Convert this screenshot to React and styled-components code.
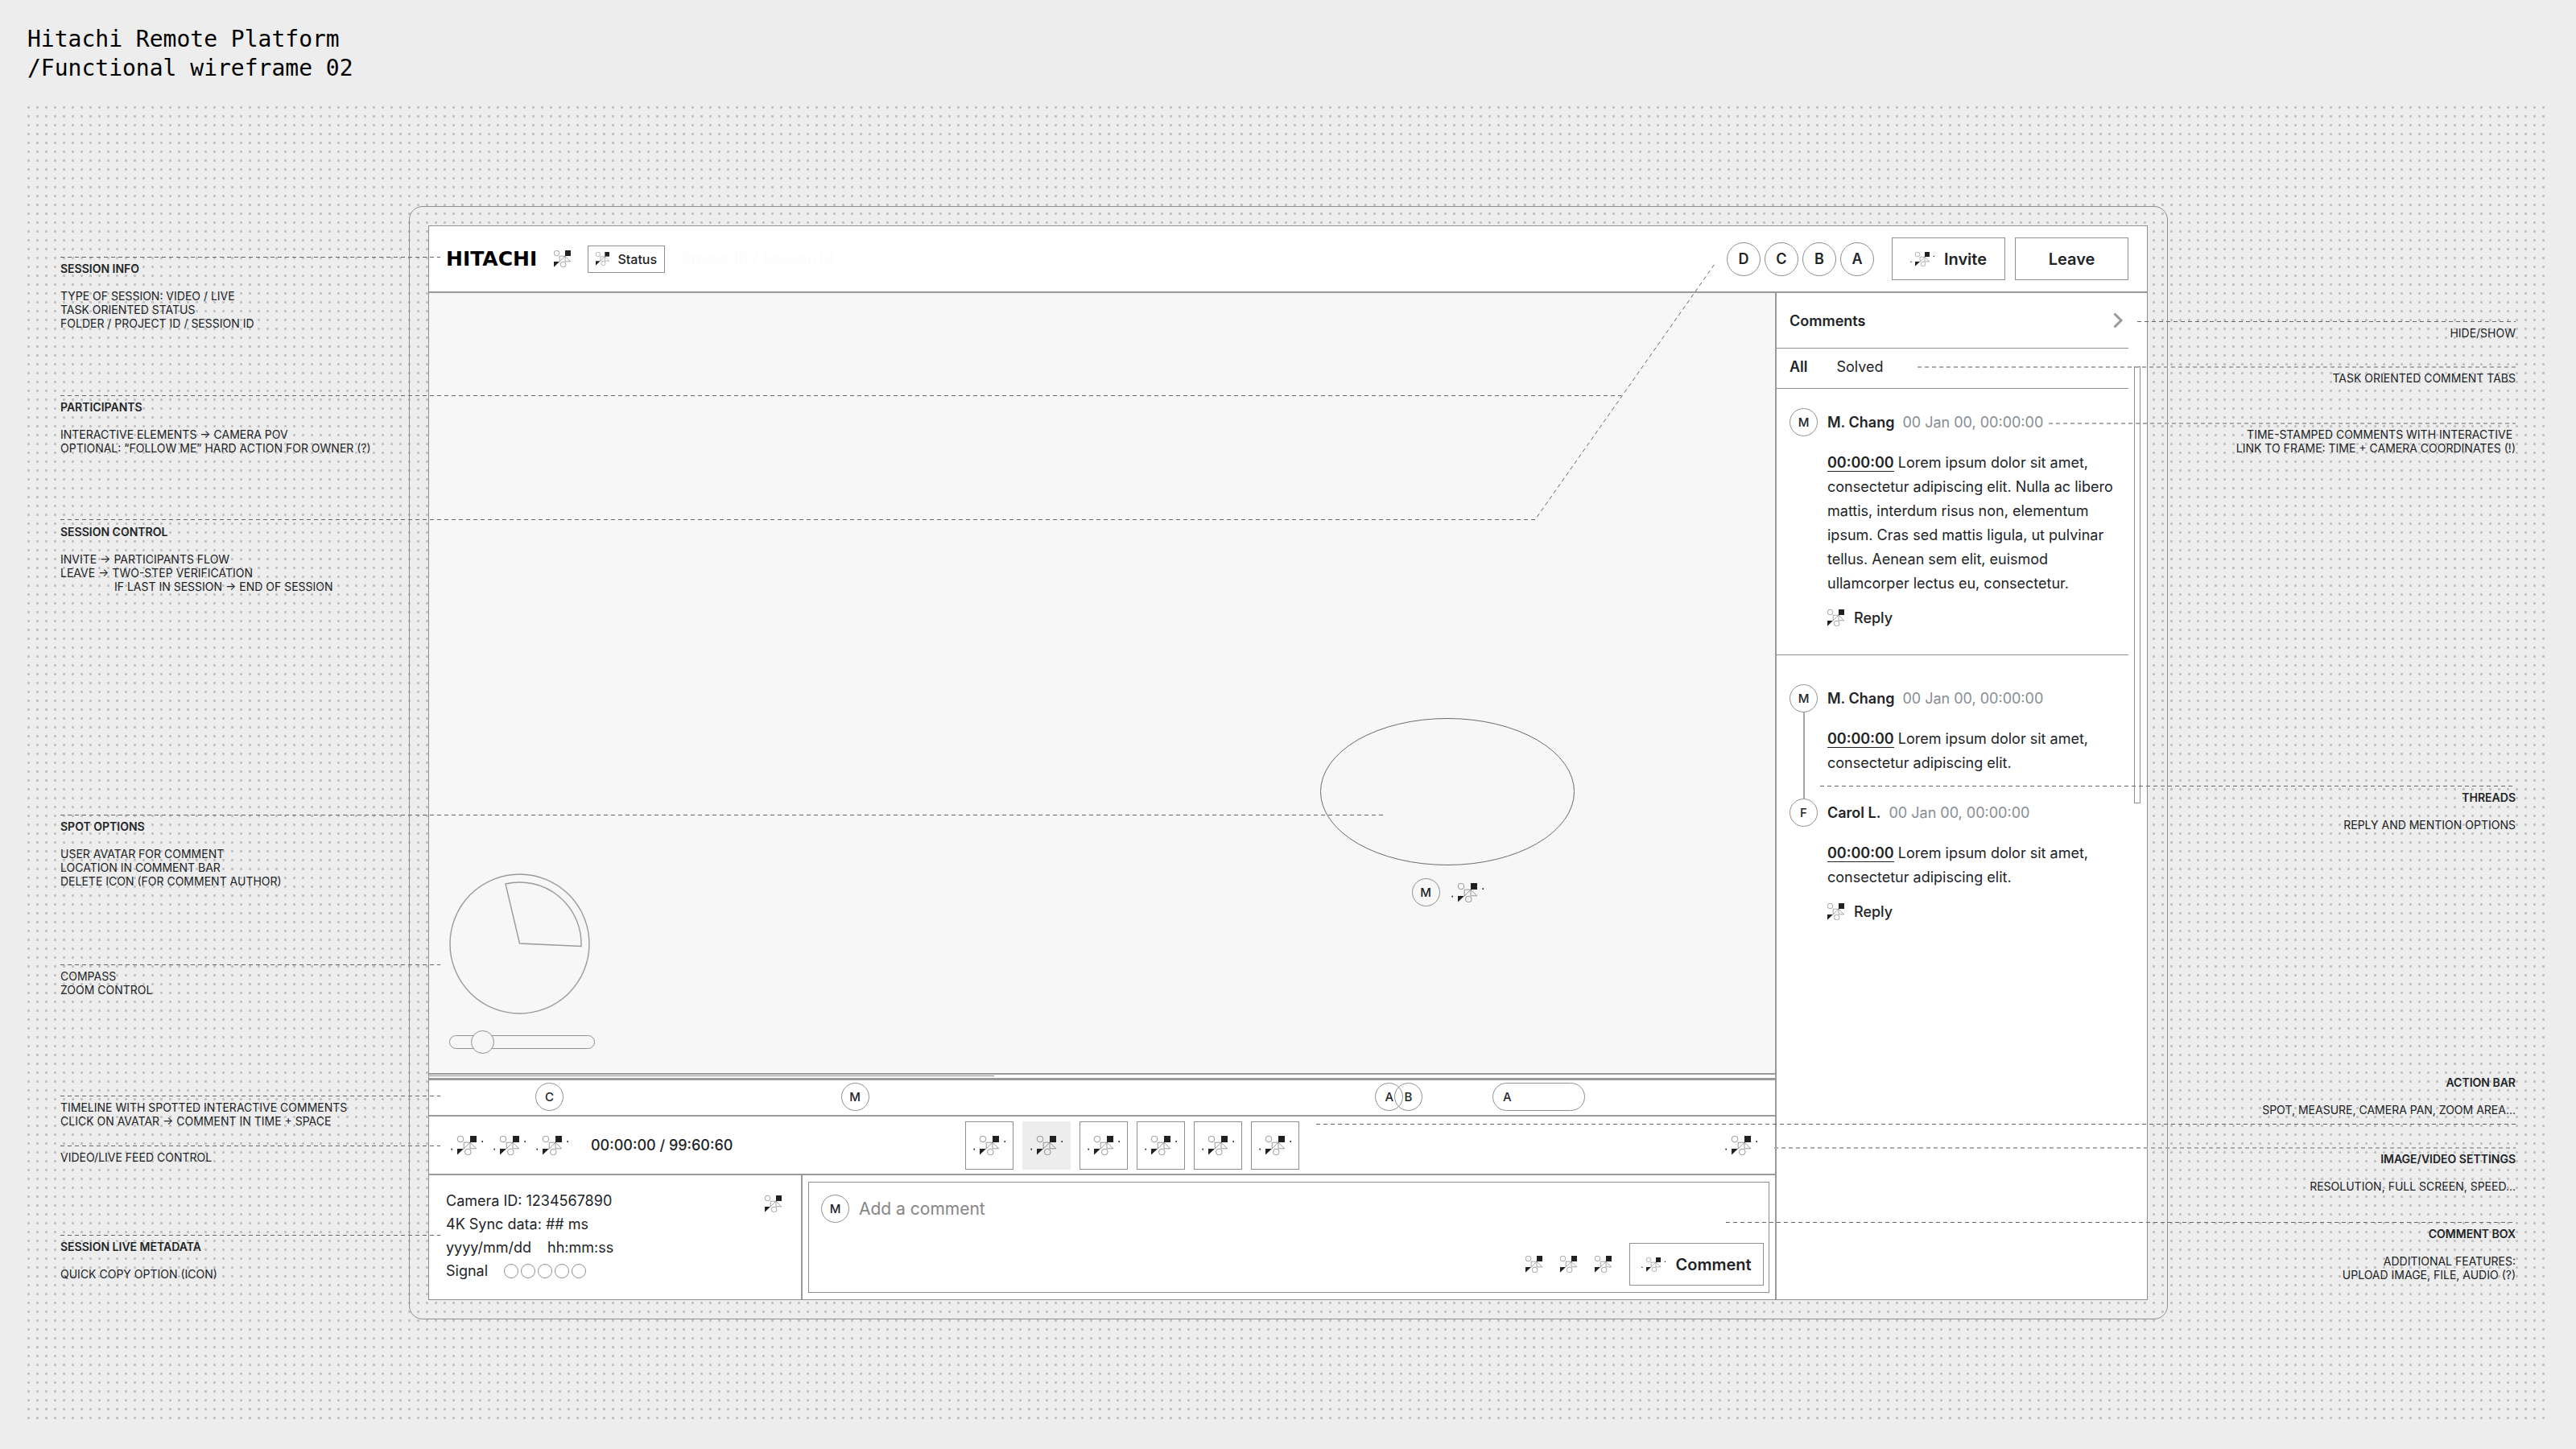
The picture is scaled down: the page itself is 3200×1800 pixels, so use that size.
import React from "react";
import styled, { createGlobalStyle, css } from "styled-components";

const line = "#9a9a9a";
const thin = "1px solid #8f8f8f";
const thick = `2px solid ${line}`;
const ink = "#212427";

const GlobalStyle = createGlobalStyle`
  *, *::before, *::after { box-sizing: border-box; }
  body {
    margin: 0;
    background: #ededed;
    color: ${ink};
    font-family: Inter, "Liberation Sans", sans-serif;
  }
  h1, h2, h3, p, ul { margin: 0; padding: 0; }
  button, input, textarea { font: inherit; color: inherit; }
`;

const Page = styled.main`
  display: flex;
  flex-direction: column;
  min-height: 100vh;
  padding: 0 35px 33px 30px;
`;

const Title = styled.h1`
  height: 128px;
  padding: 31px 0 0 4px;
  color: #000;
  font-family: "DejaVu Sans Mono", monospace;
  font-size: 28px;
  font-weight: 400;
  line-height: 36px;
`;

const Board = styled.div`
  flex: 1;
  display: grid;
  grid-template-columns: 478px minmax(0, 1fr) 472px;
  padding: 128px 0;
  background-image: radial-gradient(circle, #c0c0c0 1.2px, transparent 2px);
  background-size: 11px 11px;
`;

/* Annotations */

const Notes = styled.div`
  display: grid;
  align-content: start;
  grid-template-rows: ${(p) => p.$rows};
  padding: ${(p) => (p.$side === "right" ? "143px 40px 0 0" : "63px 0 0 45px")};
  text-align: ${(p) => p.$side};
`;

const NoteBox = styled.section`
  position: relative;
  padding-top: ${(p) => (p.$below ? 0 : 6)}px;
  font-size: 14px;
  line-height: 17px;
  white-space: pre;
`;

const NoteTitle = styled.h2`
  margin-bottom: 17px;
  font-size: 14px;
  font-weight: 600;
  line-height: 17px;
`;

const Leader = styled.span`
  position: absolute;
  z-index: 1;
  top: ${(p) => p.$top || 0}px;
  ${(p) => p.$side}: 0;
  width: ${(p) => p.$length}px;
  height: ${(p) => (p.$soft ? 2 : 1)}px;
  background: repeating-linear-gradient(
    to right,
    ${(p) => (p.$soft ? "#ababab" : "#666")} 0 5px,
    transparent 5px 9px
  );
`;

const BentLeader = styled.svg`
  position: absolute;
  z-index: 1;
  left: 0;
  bottom: 100%;
  pointer-events: none;
`;

function Note({ title, text, side = "left", length, soft, below }) {
  return (
    <NoteBox $below={below}>
      {length ? (
        <Leader $side={side} $length={length} $soft={soft} $top={below ? 60 : 0} />
      ) : (
        <BentLeader width="2056" height="318" viewBox="0 0 2056 318" fill="none">
          <path d="M0 317.5H1832L2055 0" stroke="#666" strokeDasharray="5 4" />
        </BentLeader>
      )}
      {title && <NoteTitle>{title}</NoteTitle>}
      <p>{text}</p>
    </NoteBox>
  );
}

/* Placeholder glyph */

function Glyph({ size = 24, dots }) {
  const box = dots ? "-8 0 40 24" : "0 0 24 24";
  return (
    <svg
      width={dots ? Math.round((size * 40) / 24) : size}
      height={size}
      viewBox={box}
      fill="none"
      stroke="#555"
      strokeWidth="0.6"
      aria-hidden="true"
    >
      <circle cx="4" cy="4" r="3.8" />
      <circle cx="13.3" cy="20" r="3.8" />
      <path d="M8.2 8.2H16L8.2 16Z" />
      <path d="M16 8.2V15.8H23.6Z" />
      <path d="M16 0H24V8H16Z" fill="#212121" stroke="none" />
      <path d="M0 16H8L0 23.6Z" fill="#212121" stroke="none" />
      {dots && (
        <path d="M-7.6 15.8h1.6v1.6h-1.6zM30.4 6.3h1.6v1.6h-1.6z" fill="#212121" stroke="none" />
      )}
    </svg>
  );
}

/* Device */

const Device = styled.div`
  display: flex;
  padding: 23px 24px 23px 23px;
  border: ${thin};
  border-radius: 17px;
`;

const Screen = styled.div`
  flex: 1;
  display: flex;
  flex-direction: column;
  border: ${thin};
  background: #fff;
`;

const Row = styled.div`
  display: flex;
  align-items: center;
  gap: ${(p) => p.$gap || 0}px;
`;

const Header = styled.header`
  display: flex;
  align-items: center;
  justify-content: space-between;
  height: 83px;
  padding: 0 23px 0 21px;
  border-bottom: ${thick};
`;

const Logo = styled.span`
  color: #000;
  font-family: "DejaVu Sans", sans-serif;
  font-size: 25px;
  font-weight: 700;
  line-height: 24px;
`;

const SessionPath = styled.span`
  color: #fcfcfc;
  font-size: 18px;
`;

const Button = styled.button`
  display: flex;
  align-items: center;
  justify-content: center;
  gap: 12px;
  width: ${(p) => p.$width || 141}px;
  height: 53px;
  padding: 0;
  border: ${thin};
  background: #fff;
  font-size: 20px;
  font-weight: 600;
`;

const StatusButton = styled(Button)`
  gap: 10px;
  width: 96px;
  height: 34px;
  font-size: 16px;
  font-weight: 500;
`;

const IconButton = styled.button`
  display: flex;
  padding: 0;
  border: 0;
  background: none;
`;

const Avatar = styled.button`
  display: flex;
  align-items: center;
  justify-content: center;
  flex: none;
  width: ${(p) => (p.$large ? 42 : 35)}px;
  height: ${(p) => (p.$large ? 42 : 35)}px;
  padding: 0;
  border: ${thin};
  border-radius: 50%;
  background: transparent;
  font-size: ${(p) => (p.$large ? 18 : 15)}px;
  font-weight: ${(p) => (p.$large ? 600 : 500)};
`;

const Body = styled.div`
  flex: 1;
  display: grid;
  grid-template-columns: minmax(0, 1fr) 462px;
`;

const Main = styled.div`
  display: flex;
  flex-direction: column;
`;

const Viewport = styled.section`
  position: relative;
  flex: 1;
  display: flex;
  flex-direction: column;
  justify-content: flex-end;
  gap: 20px;
  padding: 24px 25px;
  border-bottom: ${thick};
  background: #f7f7f7;
`;

const Zoom = styled.input`
  appearance: none;
  width: 181px;
  height: 29px;
  margin: 0;
  background: transparent;

  &::-webkit-slider-runnable-track {
    height: 17px;
    border: ${thin};
    border-radius: 9px;
  }
  &::-webkit-slider-thumb {
    appearance: none;
    width: 29px;
    height: 29px;
    margin-top: -7px;
    border: ${thin};
    border-radius: 50%;
    background: #f7f7f7;
  }
`;

const Spot = styled.div`
  position: absolute;
  left: 1107px;
  top: 528px;
  display: flex;
  flex-direction: column;
  align-items: center;
  gap: 16px;
`;

const Scrubber = styled.div`
  height: 7px;
  padding-top: 1px;
  border-bottom: 3px solid ${line};

  &::before {
    content: "";
    display: block;
    width: 42%;
    border-top: ${thin};
  }
`;

const Timeline = styled.div`
  position: relative;
  height: 45px;
  border-bottom: ${thick};
`;

const Marker = styled(Avatar)`
  position: absolute;
  top: 3px;
  left: ${(p) => p.$at}%;
  ${(p) =>
    p.$span &&
    css`
      justify-content: flex-start;
      width: ${p.$span}px;
      padding-left: 12px;
      border-radius: 18px;
    `}
`;

const Controls = styled.div`
  display: flex;
  align-items: center;
  height: 73px;
  padding: 0 22px 0 0;
  border-bottom: ${thick};
`;

const Transport = styled(Row)`
  width: 666px;
  padding-left: 27px;
`;

const Clock = styled.time`
  margin-left: 15px;
  font-size: 18px;
  font-weight: 500;
`;

const Tools = styled(Row)`
  flex: 1;
`;

const Tool = styled.button`
  display: flex;
  align-items: center;
  justify-content: center;
  width: 60px;
  height: 60px;
  padding: 0;
  border: ${(p) => (p.$active ? 0 : thin)};
  background: ${(p) => (p.$active ? "#ededed" : "#fff")};
`;

const Footer = styled.div`
  display: grid;
  grid-template-columns: 464px minmax(0, 1fr);
  height: 154px;
`;

const Metadata = styled.section`
  display: flex;
  justify-content: space-between;
  align-items: flex-start;
  padding: 17px 24px 17px 21px;
  border-right: ${thick};
  font-size: 18px;
  line-height: 29px;
`;

const Signal = styled.i`
  width: 18px;
  height: 18px;
  border: ${thin};
  border-radius: 50%;
`;

const CopyButton = styled(IconButton)`
  margin-top: 8px;
`;

const Composer = styled.form`
  display: flex;
  flex-direction: column;
  justify-content: space-between;
  margin: 8px 7px;
  padding: 15px 6px 8px 15px;
  border: ${thin};
`;

const CommentInput = styled.input`
  flex: 1;
  padding: 0;
  border: 0;
  background: none;
  font-size: 21px;

  &::placeholder { color: #868686; }
`;

const Actions = styled(Row)`
  justify-content: flex-end;
`;

/* Comments */

const Sidebar = styled.aside`
  display: flex;
  border-left: ${thick};
  font-size: 18px;
`;

const Feed = styled.div`
  flex: 1;
`;

const FeedHead = styled.div`
  display: flex;
  align-items: center;
  justify-content: space-between;
  height: 69px;
  padding: 0 6px 0 16px;
  border-bottom: ${thin};
`;

const FeedTitle = styled.h2`
  font-size: 18px;
  font-weight: 600;
`;

const Tabs = styled.div`
  display: flex;
  align-items: center;
  gap: 36px;
  height: 50px;
  padding: 0 16px 4px;
  border-bottom: ${thin};
`;

const Tab = styled.button`
  padding: 0;
  border: 0;
  background: none;
  font-size: 18px;
  font-weight: ${(p) => (p.$active ? 600 : 400)};
`;

const Thread = styled.div`
  padding: ${(p) => (p.$first ? 24 : 36)}px 0 35px 16px;
  border-bottom: ${(p) => (p.$first ? thin : 0)};
`;

const Entry = styled.article`
  display: grid;
  grid-template-columns: 35px minmax(0, 1fr);
  column-gap: 12px;
`;

const Rail = styled.div`
  display: flex;
  flex-direction: column;
  align-items: center;
`;

const Link = styled.div`
  flex: 1;
  border-left: 2px solid #a1a7ab;
`;

const EntryHead = styled(Row)`
  height: 35px;
`;

const Author = styled.h3`
  font-size: 18px;
  font-weight: 600;
`;

const Stamp = styled.time`
  color: #868d93;
`;

const EntryBody = styled.div`
  padding-bottom: ${(p) => (p.$linked ? 29 : 0)}px;
`;

const Text = styled.p`
  margin-top: 18px;
  padding-right: 16px;
  line-height: 30px;
`;

const Frame = styled.a`
  color: inherit;
  font-weight: 600;
  text-decoration: none;
  border-bottom: 1px solid ${ink};
`;

const Reply = styled.button`
  display: flex;
  align-items: center;
  gap: 12px;
  height: 21px;
  margin-top: 17px;
  padding: 0;
  border: 0;
  background: none;
  font-size: 18px;
  font-weight: 500;
`;

const Gutter = styled.div`
  width: 23px;
  padding: 91px 8px 0 7px;
`;

const Thumb = styled.div`
  height: 543px;
  border: ${thin};
`;

function Comment({ initial, author, children, linked, reply }) {
  return (
    <Entry>
      <Rail>
        <Avatar>{initial}</Avatar>
        {linked && <Link />}
      </Rail>
      <EntryBody $linked={linked}>
        <EntryHead $gap={10}>
          <Author>{author}</Author>
          <Stamp>00 Jan 00, 00:00:00</Stamp>
        </EntryHead>
        <Text>
          <Frame href="#frame">00:00:00</Frame> {children}
        </Text>
        {reply && (
          <Reply>
            <Glyph size={21} />
            Reply
          </Reply>
        )}
      </EntryBody>
    </Entry>
  );
}

const markers = [
  { label: "C", at: 7.9 },
  { label: "M", at: 30.6 },
  { label: "A", at: 70.3 },
  { label: "B", at: 71.7 },
  { label: "A", at: 79, span: 115 },
];

const tools = ["Spot", "Measure", "Pan", "Zoom", "Area", "More"];

export default function App() {
  return (
    <>
      <GlobalStyle />
      <Page>
        <Title>
          Hitachi Remote Platform
          <br />
          /Functional wireframe 02
        </Title>
        <Board>
          <Notes $side="left" $rows="172px 155px 366px 186px 163px 62px 111px auto">
            <Note title="SESSION INFO" length={472} text={"TYPE OF SESSION: VIDEO / LIVE\nTASK ORIENTED STATUS\nFOLDER / PROJECT ID / SESSION ID"} />
            <Note title="PARTICIPANTS" length={1939} text={"INTERACTIVE ELEMENTS → CAMERA POV\nOPTIONAL: “FOLLOW ME” HARD ACTION FOR OWNER (?)"} />
            <Note title="SESSION CONTROL" text={"INVITE → PARTICIPANTS FLOW\nLEAVE → TWO-STEP VERIFICATION\n                 IF LAST IN SESSION → END OF SESSION"} />
            <Note title="SPOT OPTIONS" length={1645} text={"USER AVATAR FOR COMMENT\nLOCATION IN COMMENT BAR\nDELETE ICON (FOR COMMENT AUTHOR)"} />
            <Note length={472} text={"COMPASS\nZOOM CONTROL"} />
            <Note length={472} text={"TIMELINE WITH SPOTTED INTERACTIVE COMMENTS\nCLICK ON AVATAR → COMMENT IN TIME + SPACE"} />
            <Note length={472} text="VIDEO/LIVE FEED CONTROL" />
            <Note title="SESSION LIVE METADATA" length={472} text="QUICK COPY OPTION (ICON)" />
          </Notes>

          <Device>
            <Screen>
              <Header>
                <Row $gap={21}>
                  <Logo>HITACHI</Logo>
                  <IconButton aria-label="Session type">
                    <Glyph size={21} />
                  </IconButton>
                  <StatusButton>
                    <Glyph size={17} />
                    Status
                  </StatusButton>
                  <SessionPath>Project ID / Session ID</SessionPath>
                </Row>
                <Row $gap={22}>
                  <Row $gap={5}>
                    {["D", "C", "B", "A"].map((name) => (
                      <Avatar key={name} $large>
                        {name}
                      </Avatar>
                    ))}
                  </Row>
                  <Row $gap={12}>
                    <Button>
                      <Glyph size={18} dots />
                      Invite
                    </Button>
                    <Button>Leave</Button>
                  </Row>
                </Row>
              </Header>

              <Body>
                <Main>
                  <Viewport>
                    <Spot>
                      <svg width="316" height="183" viewBox="0 0 316 183" fill="none" stroke="#6b6b6b">
                        <ellipse cx="158" cy="91.5" rx="157.5" ry="91" />
                      </svg>
                      <Row $gap={14}>
                        <Avatar>M</Avatar>
                        <Glyph dots />
                      </Row>
                    </Spot>
                    <svg width="175" height="175" viewBox="0 0 175 175" fill="none" stroke={line} strokeWidth="1.4">
                      <circle cx="87.5" cy="87.5" r="86.5" />
                      <path d="M87.5 87L70 13A76.5 76.5 0 0 1 164 90.5Z" />
                    </svg>
                    <Zoom type="range" aria-label="Zoom" defaultValue={17} />
                  </Viewport>
                  <Scrubber />
                  <Timeline>
                    {markers.map((m) => (
                      <Marker key={m.at} $at={m.at} $span={m.span}>
                        {m.label}
                      </Marker>
                    ))}
                  </Timeline>
                  <Controls>
                    <Transport $gap={13}>
                      {["Back", "Play", "Forward"].map((name) => (
                        <IconButton key={name} aria-label={name}>
                          <Glyph dots />
                        </IconButton>
                      ))}
                      <Clock>00:00:00 / 99:60:60</Clock>
                    </Transport>
                    <Tools $gap={11}>
                      {tools.map((name, i) => (
                        <Tool key={name} aria-label={name} $active={i === 1}>
                          <Glyph dots />
                        </Tool>
                      ))}
                    </Tools>
                    <IconButton aria-label="Settings">
                      <Glyph dots />
                    </IconButton>
                  </Controls>
                  <Footer>
                    <Metadata>
                      <div>
                        <p>Camera ID: 1234567890</p>
                        <p>4K Sync data: ## ms</p>
                        <Row $gap={20}>
                          <span>yyyy/mm/dd</span>
                          <span>hh:mm:ss</span>
                        </Row>
                        <Row $gap={20}>
                          <span>Signal</span>
                          <Row $gap={3}>
                            {[1, 2, 3, 4, 5].map((n) => (
                              <Signal key={n} />
                            ))}
                          </Row>
                        </Row>
                      </div>
                      <CopyButton aria-label="Copy">
                        <Glyph size={21} />
                      </CopyButton>
                    </Metadata>
                    <Composer>
                      <Row $gap={12}>
                        <Avatar type="button">M</Avatar>
                        <CommentInput placeholder="Add a comment" aria-label="Add a comment" />
                      </Row>
                      <Actions $gap={22}>
                        {["Image", "File", "Audio"].map((name) => (
                          <IconButton key={name} type="button" aria-label={name}>
                            <Glyph size={21} />
                          </IconButton>
                        ))}
                        <Button type="button" $width={167}>
                          <Glyph size={18} dots />
                          Comment
                        </Button>
                      </Actions>
                    </Composer>
                  </Footer>
                </Main>

                <Sidebar>
                  <Feed>
                    <FeedHead>
                      <FeedTitle>Comments</FeedTitle>
                      <IconButton aria-label="Hide comments">
                        <svg width="13" height="20" viewBox="0 0 13 20" fill="none" stroke={line} strokeWidth="3">
                          <path d="M1.5 1.5L10 10L1.5 18.5" />
                        </svg>
                      </IconButton>
                    </FeedHead>
                    <Tabs>
                      <Tab $active>All</Tab>
                      <Tab>Solved</Tab>
                    </Tabs>
                    <Thread $first>
                      <Comment initial="M" author="M. Chang" reply>
                        Lorem ipsum dolor sit amet, consectetur adipiscing elit. Nulla ac libero mattis,
                        interdum risus non, elementum ipsum. Cras sed mattis ligula, ut pulvinar tellus.
                        Aenean sem elit, euismod ullamcorper lectus eu, consectetur.
                      </Comment>
                    </Thread>
                    <Thread>
                      <Comment initial="M" author="M. Chang" linked>
                        Lorem ipsum dolor sit amet, consectetur adipiscing elit.
                      </Comment>
                      <Comment initial="F" author="Carol L." reply>
                        Lorem ipsum dolor sit amet, consectetur adipiscing elit.
                      </Comment>
                    </Thread>
                  </Feed>
                  <Gutter>
                    <Thumb />
                  </Gutter>
                </Sidebar>
              </Body>
            </Screen>
          </Device>

          <Notes $side="right" $rows="56px 70px 451px 360px 89px 93px auto">
            <Note side="right" length={470} text="HIDE/SHOW" />
            <Note side="right" length={743} soft text="TASK ORIENTED COMMENT TABS" />
            <Note side="right" length={580} soft text={"TIME-STAMPED COMMENTS WITH INTERACTIVE \nLINK TO FRAME: TIME + CAMERA COORDINATES (!)"} />
            <Note side="right" length={864} title="THREADS" text="REPLY AND MENTION OPTIONS" />
            <Note side="right" length={1490} below title="ACTION BAR" text="SPOT, MEASURE, CAMERA PAN, ZOOM AREA..." />
            <Note side="right" length={921} soft title="IMAGE/VIDEO SETTINGS" text="RESOLUTION, FULL SCREEN, SPEED..." />
            <Note side="right" length={981} title="COMMENT BOX" text={"ADDITIONAL FEATURES:\nUPLOAD IMAGE, FILE, AUDIO (?)"} />
          </Notes>
        </Board>
      </Page>
    </>
  );
}
